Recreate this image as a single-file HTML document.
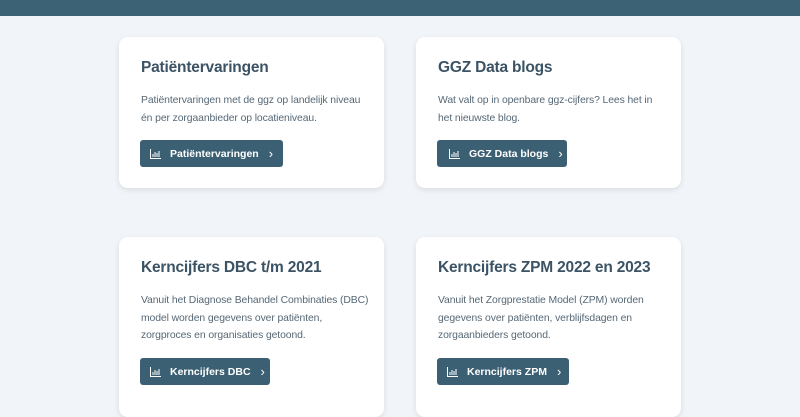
<!DOCTYPE html><html><head><style>
body{margin:0;width:800px;height:400px;overflow:hidden;background:#f1f5f9;font-family:"Liberation Sans",sans-serif;position:relative}
.hd{position:absolute;left:0;top:0;width:800px;height:16px;background:#3c6275}
.c{position:absolute;width:265px;background:#fff;border-radius:9px;box-shadow:0 2px 6px rgba(0,0,0,.1);box-sizing:border-box}
h2{margin:0;position:absolute;left:22px;font-size:15.5px;letter-spacing:-0.2px;color:#3b5364;font-weight:bold;white-space:nowrap}
p{margin:0;position:absolute;left:22px;font-size:10.4px;letter-spacing:-0.1px;line-height:17.5px;color:#566876;white-space:nowrap}
.b{position:absolute;left:21px;height:27px;background:#3c6073;border-radius:3px;color:#fff;font-size:10.5px;font-weight:bold;display:flex;align-items:center;padding:0 12px 0 10px;box-sizing:border-box;white-space:nowrap}
.b svg{margin-right:9px;flex-shrink:0}
.b i{font-style:normal;margin-left:10px;font-weight:normal;font-size:13px}
</style></head><body>
<div class="hd"></div>
<div class="c" style="left:119px;top:37px;height:151px">
<h2 style="top:22px">Patiëntervaringen</h2>
<p style="top:55px">Patiëntervaringen met de ggz op landelijk niveau<br>én per zorgaanbieder op locatieniveau.</p>
<div class="b" style="top:103px;width:143px"><svg width="11" height="10" viewBox="0 0 11 10" fill="none" stroke="#fff" stroke-width="1"><path d="M.5 0v9.5H11M3 5v3M5 3v5M7 4v4M9 2v6"/></svg>Patiëntervaringen<i>›</i></div>
</div>
<div class="c" style="left:416px;top:37px;height:151px">
<h2 style="top:22px">GGZ Data blogs</h2>
<p style="top:55px">Wat valt op in openbare ggz-cijfers? Lees het in<br>het nieuwste blog.</p>
<div class="b" style="top:103px;width:130px;padding-left:12px"><svg width="11" height="10" viewBox="0 0 11 10" fill="none" stroke="#fff" stroke-width="1"><path d="M.5 0v9.5H11M3 5v3M5 3v5M7 4v4M9 2v6"/></svg>GGZ Data blogs<i>›</i></div>
</div>
<div class="c" style="left:119px;top:237px;height:180px">
<h2 style="top:22px">Kerncijfers DBC t/m 2021</h2>
<p style="top:55px">Vanuit het Diagnose Behandel Combinaties (DBC)<br>model worden gegevens over patiënten,<br>zorgproces en organisaties getoond.</p>
<div class="b" style="top:121px;width:130px"><svg width="11" height="10" viewBox="0 0 11 10" fill="none" stroke="#fff" stroke-width="1"><path d="M.5 0v9.5H11M3 5v3M5 3v5M7 4v4M9 2v6"/></svg>Kerncijfers DBC<i>›</i></div>
</div>
<div class="c" style="left:416px;top:237px;height:180px">
<h2 style="top:22px">Kerncijfers ZPM 2022 en 2023</h2>
<p style="top:55px">Vanuit het Zorgprestatie Model (ZPM) worden<br>gegevens over patiënten, verblijfsdagen en<br>zorgaanbieders getoond.</p>
<div class="b" style="top:121px;width:132px"><svg width="11" height="10" viewBox="0 0 11 10" fill="none" stroke="#fff" stroke-width="1"><path d="M.5 0v9.5H11M3 5v3M5 3v5M7 4v4M9 2v6"/></svg>Kerncijfers ZPM<i>›</i></div>
</div>
</body></html>
